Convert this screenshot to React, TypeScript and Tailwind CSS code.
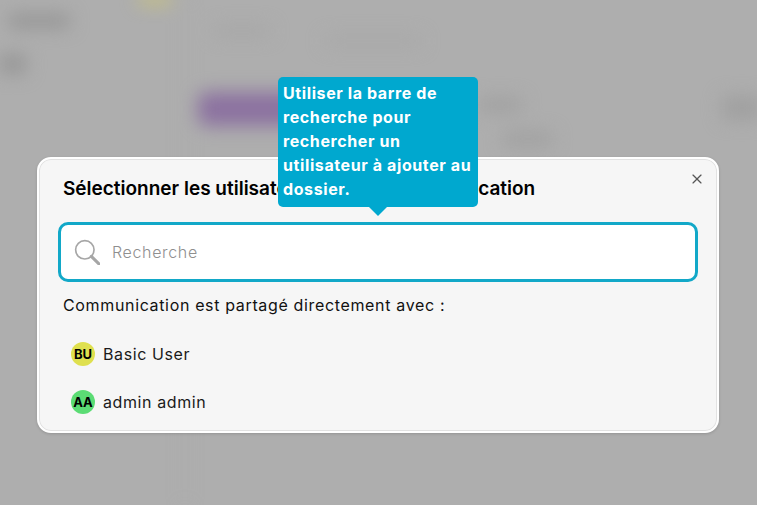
import { X } from 'lucide-react';

const users = [
  { initials: 'BU', name: 'Basic User', color: 'bg-[#dfe04f]' },
  { initials: 'AA', name: 'admin admin', color: 'bg-[#5bdc74]' },
];

function BlurredPage() {
  return (
    <div className="flex h-full blur-[9px]">
      {/* Sidebar */}
      <div className="w-[186px] shrink-0 border-r-2 border-[#a8a8a8]">
        <div className="ml-[138px] -mt-[4px] h-[7px] w-[34px] rounded-full bg-[#d4cb6a]" />
        <div className="mt-[11px] ml-[8px] h-[14px] w-[62px] rounded bg-[#959595]" />
        <div className="mt-[26px] h-[20px] w-[26px] rounded bg-[#969696]" />
      </div>
      {/* Main */}
      <div className="flex-1 pl-[12px] pt-[26px]">
        <div className="flex gap-[55px] pl-[16px]">
          <div className="h-[10px] w-[56px] rounded bg-[#a6a6a6]" />
          <div className="mt-[10px] h-[10px] w-[96px] rounded bg-[#a8a8a8]" />
        </div>
        <div className="mt-[46px] flex items-start">
          <div className="h-[34px] w-[110px] rounded-lg bg-[#8c72a0]" />
          <div className="ml-[170px] mt-[6px] h-[14px] w-[44px] rounded bg-[#a0a0a0]" />
          <div className="ml-[200px] mt-[4px] h-[24px] w-[40px] rounded bg-[#a0a0a0]" />
        </div>
        <div className="ml-[305px] mt-[6px] h-[14px] w-[50px] rounded bg-[#a0a0a0]" />
      </div>
    </div>
  );
}

export default function App() {
  return (
    <div className="relative h-[505px] w-[757px] overflow-hidden bg-[#aeaeae] font-['Inter',sans-serif]">
      <BlurredPage />

      {/* Modal */}
      <div className="absolute left-[37px] top-[157px] h-[276px] w-[682px] rounded-[14px] border-2 border-white bg-[#f6f6f6] px-[24px] pt-[18px] shadow-[0_1px_3px_rgba(0,0,0,0.15),inset_0_0_0_1px_#e2e2e2]">
        <button className="absolute right-[12px] top-[12px] text-[#555]">
          <X className="h-4 w-4" strokeWidth={1.75} />
        </button>
        <h2 className="text-[19px] leading-[24px] font-semibold text-black">
          Sélectionner les utilisateurs pour la Communication
        </h2>
        <div className="mt-[21px] -ml-[5px] flex h-[60px] w-[640px] items-center rounded-[10px] border-[3px] border-[#12a8c8] bg-white pl-[13px]">
          <svg viewBox="0 0 24 24" fill="none" className="h-[26px] w-[26px] shrink-0 text-[#a6a6a6]" stroke="currentColor">
            <circle cx="10" cy="10" r="8.5" strokeWidth="1.5" />
            <path d="M16 16l7 7" strokeWidth="2.8" strokeLinecap="round" />
          </svg>
          <span className="ml-[12px] text-[16px] font-light tracking-[0.65px] text-[#8f8f8f]">Recherche</span>
        </div>
        <p className="mt-[12px] text-[16px] leading-[22px] tracking-[0.65px] text-[#111]">
          Communication est partagé directement avec :
        </p>
        <div className="mt-[26px] flex flex-col gap-[24px] pl-[8px]">
          {users.map((user) => (
            <div key={user.name} className="flex items-center gap-[8px]">
              <div className={`flex h-6 w-6 shrink-0 items-center justify-center rounded-full pt-px text-[13px] font-bold text-black ${user.color}`}>
                {user.initials}
              </div>
              <span className="text-[16px] tracking-[0.6px] text-[#1a1a1a]">{user.name}</span>
            </div>
          ))}
        </div>
      </div>

      {/* Tooltip */}
      <div className="absolute left-[278px] top-[77px] h-[130px] w-[200px] rounded-[5px] bg-[#00a8cf] px-[5px] py-[4px] text-[16px] leading-[24px] font-bold tracking-[0.6px] text-white">
        Utiliser la barre de recherche pour rechercher un utilisateur à ajouter au dossier.
        <div className="absolute left-1/2 top-full h-0 w-0 -translate-x-1/2 border-x-[9px] border-t-[9px] border-x-transparent border-t-[#00a8cf]" />
      </div>
    </div>
  );
}
